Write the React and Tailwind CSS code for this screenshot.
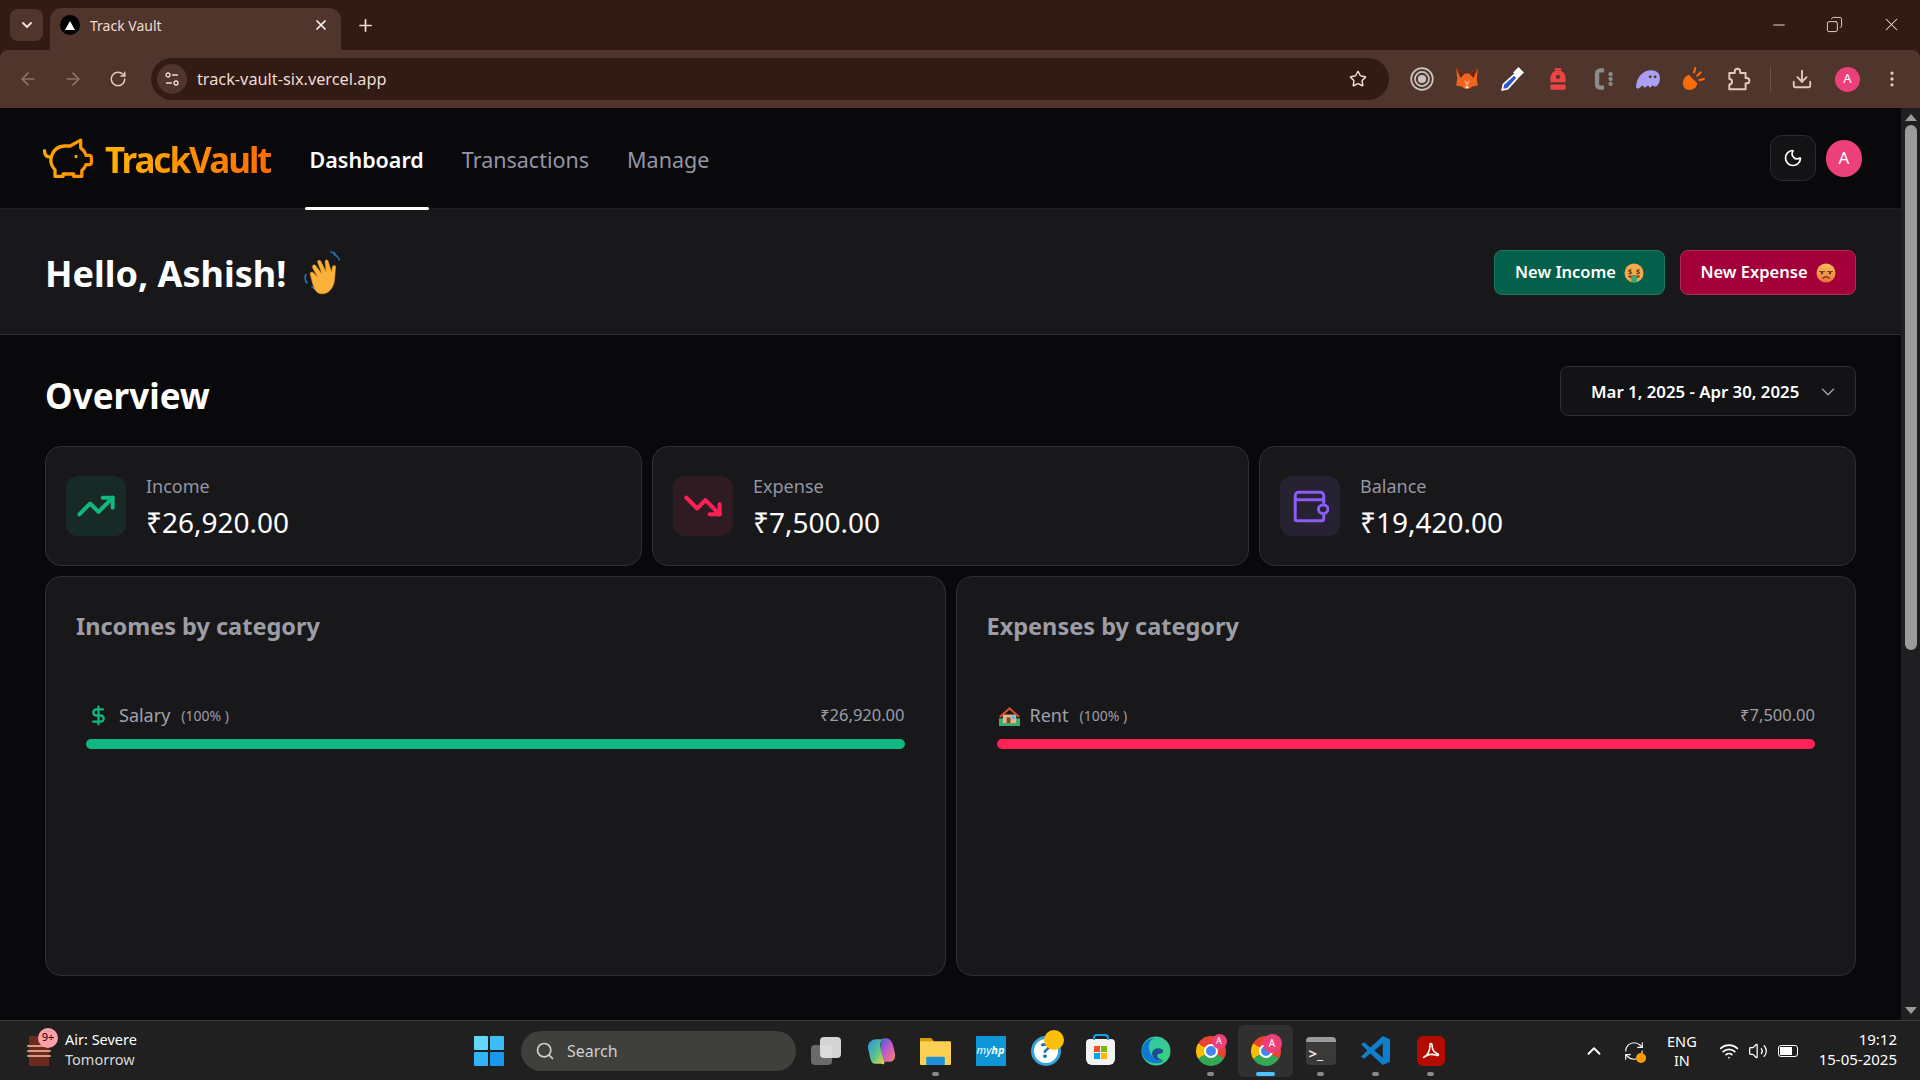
import {
  ArrowLeft, ArrowRight, ChevronDown, ChevronUp, Copy, Download, DollarSign, EllipsisVertical, Minus, Moon, Plus,
  RefreshCw, RotateCw, Search, Star, TrendingDown, TrendingUp, Volume2, Wifi, X,
} from 'lucide-react'

const extIcons = [
  <svg key="a" viewBox="0 0 24 24" className="h-[26px] w-[26px]" fill="none" stroke="#c9c3bf" strokeWidth="1.6"><circle cx="12" cy="12" r="10" /><circle cx="12" cy="12" r="6.5" /><circle cx="12" cy="12" r="3" fill="#c9c3bf" /></svg>,
  <svg key="b" viewBox="0 0 24 24" className="h-[26px] w-[26px]"><path d="M2 2l8 5h4l8-5-1 10 1 6-5 1-3 2h-4l-3-2-5-1 1-6z" fill="#f0641e" /><path d="M2 2l8 5-4 4zM22 2l-8 5 4 4z" fill="#6b2a10" /><path d="M9 13l3 6 3-6-3 2z" fill="#f9a27a" /><path d="M10 19h4l-2 2z" fill="#fff" /></svg>,
  <svg key="c" viewBox="0 0 24 24" className="h-[26px] w-[26px]"><path d="M14 8l3 3-9 10-5 1 1-5z" fill="#2f55c9" stroke="#fff" strokeWidth="1.6" /><path d="M13 6l5-5 5 5-5 5z" fill="#fff" /></svg>,
  <svg key="d" viewBox="0 0 24 24" className="h-[26px] w-[26px]"><path d="M5 11a7 7 0 0 1 14 0v4H5z" fill="#ef4444" /><rect x="5" y="17" width="14" height="5" rx="1" fill="#ef4444" /><path d="M9 2h6v2H9z" fill="#ef4444" /><circle cx="12" cy="10" r="2" fill="#4f352c" /></svg>,
  <svg key="e" viewBox="0 0 24 24" className="h-[26px] w-[26px]"><path d="M13 4H9.500a3 3 0 0 0-3 3v10a3 3 0 0 0 3 3H13" fill="none" stroke="#8a8d8c" strokeWidth="4" /><g fill="#8a8d8c"><circle cx="19" cy="7.500" r="2" /><circle cx="19" cy="12" r="2" /><circle cx="19" cy="16.500" r="2" /></g></svg>,
  <svg key="f" viewBox="0 0 24 24" className="h-[26px] w-[26px]"><path d="M1 20c0-9 6-16 14-16 5 0 8 3 8 7 0 6-3 8-5 8l-2-1-2 2-2-2-3 2-2-2-4 3z" fill="#ab9ff2" /><circle cx="14" cy="10" r="1.300" fill="#4f352c" /><circle cx="18.500" cy="10" r="1.300" fill="#4f352c" /></svg>,
  <svg key="g" viewBox="0 0 24 24" className="h-[26px] w-[26px]"><path d="M8 8l8 8a7 7 0 0 1-12 4C1 16 3 10 8 8z" fill="#f96b08" /><path d="M13 6l1-4M16 9l3-3M18 13l4-1" stroke="#f96b08" strokeWidth="2" strokeLinecap="round" /></svg>,
  <svg key="h" viewBox="0 0 24 24" className="h-[26px] w-[26px]" fill="none" stroke="#e6c9bc" strokeWidth="1.800" strokeLinejoin="round"><path d="M4 6.500h5V5a2.500 2.500 0 0 1 5 0v1.500h5v4.500h1a2.500 2.500 0 0 1 0 5h-1v5.500H4V17a2.500 2.500 0 0 0 0-5z" /></svg>,
]

function BrowserChrome() {
  return (
    <div className="bg-[#311b14]">
      <div className="flex h-[50px] items-end pl-[10px]">
        <div className="mb-[9px] flex h-[32px] w-[33px] items-center justify-center rounded-lg bg-[#4f352c] text-[#f0dcd3]">
          <ChevronDown size={16} strokeWidth={3} />
        </div>
        <div className="ml-[7px] flex h-[42px] w-[291px] items-center rounded-t-xl bg-[#4f352c] px-[10px] pb-[8px] text-[#f0dcd3]">
          <span className="flex h-[20px] w-[20px] items-center justify-center rounded-full bg-black">
            <span className="h-0 w-0 border-x-[5px] border-b-[9px] border-x-transparent border-b-white" />
          </span>
          <span className="ml-[10px] text-[14px]">Track Vault</span>
          <X size={16} strokeWidth={2.5} className="ml-auto mr-[2px] text-white" />
        </div>
        <Plus size={19} strokeWidth={2.2} className="mb-[15px] ml-[15px] text-[#f0dcd3]" />
        <div className="mb-[15px] ml-auto flex items-center gap-[38px] pr-[18px] text-[#f0dcd3]">
          <Minus size={18} strokeWidth={1.3} />
          <Copy size={17} strokeWidth={1.3} className="-scale-x-100" />
          <X size={21} strokeWidth={1.2} />
        </div>
      </div>
      <div className="flex h-[58px] items-center rounded-t-lg bg-[#4f352c] pl-[18px] pr-[18px] text-[#e6c9bc]">
        <ArrowLeft size={20} className="text-[#8f7268]" />
        <ArrowRight size={20} className="ml-[25px] text-[#8f7268]" />
        <RotateCw size={18} className="ml-[26px]" />
        <div className="ml-[24px] flex h-[42px] w-[1239px] items-center rounded-full bg-[#311b14] pl-[6px] pr-[22px]">
          <span className="flex h-[30px] w-[30px] items-center justify-center rounded-full bg-[#4f352c] text-[#f0dcd3]">
            <svg viewBox="0 0 16 16" className="h-[16px] w-[16px]" fill="none" stroke="currentColor" strokeWidth="1.300"><circle cx="4" cy="4" r="2" /><path d="M8 4h6M2 12h6" /><circle cx="12" cy="12" r="2" /></svg>
          </span>
          <span className="ml-[10px] text-[16.300px] text-[#f0dcd3]">track-vault-six.vercel.app</span>
          <Star size={18} className="ml-auto text-[#f0dcd3]" />
        </div>
        <div className="ml-[20px] flex w-[362px] items-center justify-between">
          {extIcons}
          <span className="h-[26px] w-px bg-[#6b5046]" />
        </div>
        <Download size={22} className="ml-[20px]" />
        <span className="ml-[22px] flex h-[25px] w-[25px] items-center justify-center rounded-full bg-[#ec407a] text-[13px] text-white">A</span>
        <EllipsisVertical size={20} className="ml-[22px]" />
      </div>
    </div>
  )
}

function Logo() {
  return (
    <svg viewBox="0 0 24 24" className="mt-[4px] h-[56px] w-[56px]" fill="none" strokeWidth="1.400" strokeLinecap="round" strokeLinejoin="round">
      <defs>
        <linearGradient id="pig" x1="0" x2="1" y1="0" y2="0">
          <stop offset="0" stopColor="#ffa800" />
          <stop offset="1" stopColor="#ff8f00" />
        </linearGradient>
      </defs>
      <path stroke="url(#pig)" d="M15 10.500v.01M17 3.500v3.300a6 6 0 0 1 2.300 3.200h1.300a1 1 0 0 1 1 1v2a1 1 0 0 1-1 1h-1.300a6 6 0 0 1-1.800 2.500v2.500h-3.500v-1h-4.500v1H6v-2.800A6 6 0 0 1 10 6h2.500zM1.500 8c0 1.700 1 2.700 2.600 2.700" />
    </svg>
  )
}

function Hand() {
  return (
    <svg viewBox="0 0 40 44" className="h-[46px] w-[42px]">
      <path d="M4 22c-2 3-1 7 1 9M9 34c2 2 4 3 6 4M30 3c3 1 5 3 6 6M27 1c2 0 4 1 5 2" fill="none" stroke="#1f77c0" strokeWidth="1.500" />
      <path d="M8 23c-1-2 1-4 3-2l4 4-5-9c-1-2 2-4 3-2l6 8-4-11c-1-2 2-3 3-1l5 10-1-10c0-2 3-2 3 0l3 10 1-5c1-2 4-1 3 1l-1 12c-1 7-5 13-12 13-6 0-8-5-11-18z" fill="#fbb13c" stroke="#f59e0b" strokeWidth="0.500" />
    </svg>
  )
}

function MoneyFace() {
  return (
    <svg viewBox="0 0 20 20" className="h-[20px] w-[20px]">
      <circle cx="10" cy="10" r="9.500" fill="#f5a94a" />
      <text x="6" y="10.500" fontSize="7" fontWeight="700" textAnchor="middle" fill="#5a3a12">$</text>
      <text x="14" y="10.500" fontSize="7" fontWeight="700" textAnchor="middle" fill="#5a3a12">$</text>
      <path d="M4 12.500h12c0 1.500-1.500 2.500-2.500 2.500H6.500C5.500 15 4 14 4 12.500z" fill="#8a3a2a" />
      <rect x="7" y="13" width="6" height="6" rx="1" fill="#3aa76d" />
    </svg>
  )
}

function TiredFace() {
  return (
    <svg viewBox="0 0 20 20" className="h-[20px] w-[20px]">
      <defs>
        <linearGradient id="tired" x1="0" x2="0" y1="0" y2="1">
          <stop offset="0" stopColor="#f8c25a" />
          <stop offset="1" stopColor="#f0703a" />
        </linearGradient>
      </defs>
      <circle cx="10" cy="10" r="9.500" fill="url(#tired)" />
      <path d="M3.500 8.500h5M11.500 8.500h5" stroke="#7a4b12" strokeWidth="1.200" strokeLinecap="round" />
      <circle cx="6" cy="10" r="1.200" fill="#5a3412" />
      <circle cx="14" cy="10" r="1.200" fill="#5a3412" />
      <path d="M7 15c1.500-1.500 4.500-1.500 6 0" fill="none" stroke="#5a3412" strokeWidth="1.200" strokeLinecap="round" />
    </svg>
  )
}

function House() {
  return (
    <svg viewBox="0 0 22 22" className="h-[21px] w-[21px]">
      <rect x="0" y="14" width="22" height="8" fill="#3fae6a" />
      <path d="M4 10h14v9H4z" fill="#e8b48a" />
      <path d="M0 12L11 2l11 10-2 1-9-8-9 8z" fill="#d9532c" />
      <rect x="8" y="13" width="4" height="6" fill="#7a4a2a" />
      <circle cx="15" cy="13" r="2" fill="#5db9e8" />
    </svg>
  )
}

function WalletIcon() {
  return (
    <svg viewBox="0 0 36 36" className="h-[38px] w-[38px]" fill="none" stroke="#8b5cf6" strokeWidth="2.800" strokeLinecap="round" strokeLinejoin="round">
      <path d="M31 14V8a3 3 0 0 0-3-3H7a3 3 0 0 0-3 3v22a2 2 0 0 0 2 2h23a2 2 0 0 0 2-2v-5" />
      <path d="M4 10a2 2 0 0 0 2 2h25v3" />
      <rect x="26" y="17" width="9" height="8" rx="4" />
    </svg>
  )
}

const stats = [
  { label: 'Income', value: '₹26,920.00', box: 'bg-[#172a26]', icon: <TrendingUp size={40} strokeWidth={2.4} className="text-[#10b981]" /> },
  { label: 'Expense', value: '₹7,500.00', box: 'bg-[#2f1c23]', icon: <TrendingDown size={40} strokeWidth={2.4} className="text-[#ff2056]" /> },
  { label: 'Balance', value: '₹19,420.00', box: 'bg-[#272232]', icon: <WalletIcon /> },
]

function StatCard({ item }) {
  return (
    <div className="flex h-[120px] flex-1 items-center gap-[20px] rounded-2xl border border-[#303034] bg-[#18181b] px-[20px]">
      <div className={`flex h-[60px] w-[60px] items-center justify-center rounded-xl ${item.box}`}>{item.icon}</div>
      <div className="pt-[2px]">
        <p className="text-[18px] leading-[24px] text-[#9495a3]">{item.label}</p>
        <p className="mt-[5px] text-[28px] leading-[38px] text-white">{item.value}</p>
      </div>
    </div>
  )
}

function CategoryCard({ title, icon, name, amount, bar }) {
  return (
    <div className="h-[400px] flex-1 rounded-2xl border border-[#303034] bg-[#18181b] px-[30px] pt-[31px]">
      <h3 className="text-[23.500px] font-bold leading-[36px] text-[#9d9da6]">{title}</h3>
      <div className="mt-[58px] px-[10px]">
        <div className="flex items-center">
          <span className="flex w-[25px] justify-center">{icon}</span>
          <span className="ml-[8px] text-[18px] text-[#a1a1aa]">{name}</span>
          <span className="ml-[11px] text-[14px] text-[#9d9da6]">(100% )</span>
          <span className="ml-auto text-[16.500px] text-[#9d9da6]">{amount}</span>
        </div>
        <div className={`mt-[10px] h-[10px] rounded-full ${bar}`} />
      </div>
    </div>
  )
}

function Dashboard() {
  return (
    <div className="min-w-0 flex-1 bg-[#09090b]">
      <header className="flex h-[101px] items-center border-b border-[#1f1f22] pl-[41px] pr-[39px]">
        <Logo />
        <span className="ml-[8px] bg-gradient-to-r from-[#ffb300] to-[#ff6a00] bg-clip-text pt-[5px] text-[35px] font-bold tracking-[-2px] text-transparent">TrackVault</span>
        <nav className="ml-[39px] flex h-full items-stretch gap-[38px] pt-[3px] text-[21.500px] leading-[30px]">
          <a className="relative flex items-center font-semibold text-white">
            Dashboard
            <span className="absolute -bottom-[2px] -inset-x-[5px] h-[3px] rounded-sm bg-white" />
          </a>
          <a className="flex items-center text-[#9495a3]">Transactions</a>
          <a className="flex items-center text-[#9495a3]">Manage</a>
        </nav>
        <div className="ml-auto flex items-center gap-[10px]">
          <button className="flex h-[46px] w-[46px] items-center justify-center rounded-xl border border-[#2c2c30] bg-[#131316] text-white">
            <Moon size={20} />
          </button>
          <span className="flex h-[37px] w-[36px] items-center justify-center rounded-full bg-[#ec407a] text-[17px] text-white">A</span>
        </div>
      </header>

      <section className="flex h-[126px] items-center justify-between border-b border-[#303034] bg-[#18181b] px-[45px]">
        <div className="flex items-center gap-[16px] pt-[5px]">
          <h1 className="text-[36px] font-bold text-white">Hello, Ashish!</h1>
          <Hand />
        </div>
        <div className="mt-[1px] flex gap-[15px]">
          <button className="flex h-[45px] w-[171px] items-center justify-center gap-[8px] rounded-lg border border-[#1b7a5f] bg-[#04604a] pt-[1px] text-[16.500px] font-semibold text-white">
            New Income <MoneyFace />
          </button>
          <button className="flex h-[45px] w-[176px] items-center justify-center gap-[8px] rounded-lg border border-[#b52b57] bg-[#a3003a] pt-[1px] text-[16.500px] font-semibold text-white">
            New Expense <TiredFace />
          </button>
        </div>
      </section>

      <section className="px-[45px] pt-[31px]">
        <div className="flex items-start justify-between">
          <h2 className="text-[35px] font-bold leading-[60px] text-white">Overview</h2>
          <button className="flex h-[50px] w-[296px] items-center gap-[18px] rounded-lg border border-[#303034] bg-[#131316] pl-[30px] pt-[1px] text-[16.800px] font-semibold text-white">
            Mar 1, 2025 - Apr 30, 2025
            <ChevronDown size={22} strokeWidth={1.5} className="text-[#a1a1aa]" />
          </button>
        </div>
        <div className="mt-[20px] flex gap-[10px]">
          {stats.map((s) => <StatCard key={s.label} item={s} />)}
        </div>
        <div className="mt-[10px] flex gap-[10px]">
          <CategoryCard title="Incomes by category" name="Salary" amount="₹26,920.00" bar="bg-[#10b981]" icon={<DollarSign size={21} strokeWidth={2.6} className="text-[#10b981]" />} />
          <CategoryCard title="Expenses by category" name="Rent" amount="₹7,500.00" bar="bg-[#ff2056]" icon={<House />} />
        </div>
      </section>
    </div>
  )
}

function Scrollbar() {
  return (
    <div className="flex w-[19px] flex-col items-center bg-[#1f1f21] py-[6px]">
      <span className="h-0 w-0 border-x-[6px] border-b-[7px] border-x-transparent border-b-[#9b9b9b]" />
      <span className="mt-[4px] h-[525px] w-[12px] rounded-full bg-[#9b9b9b]" />
      <span className="mt-auto h-0 w-0 border-x-[6px] border-t-[7px] border-x-transparent border-t-[#9b9b9b]" />
    </div>
  )
}

function ChromeGlyph({ badge }) {
  return (
    <span className="relative block h-[30px] w-[30px]">
      <span className="block h-[30px] w-[30px] rounded-full bg-[conic-gradient(#ea4335_0_120deg,#34a853_120deg_240deg,#fbbc04_240deg_300deg,#ea4335_300deg_360deg)]" />
      <span className="absolute left-[8px] top-[8px] h-[14px] w-[14px] rounded-full border-2 border-white bg-[#4285f4]" />
      <span className={`absolute -right-[1px] -top-[2px] flex items-center justify-center rounded-full bg-[#ec407a] text-white ${badge}`}>A</span>
    </span>
  )
}

const dock = [
  { key: 'tasks', icon: <span className="relative block h-[28px] w-[30px]"><span className="absolute bottom-0 left-0 h-[20px] w-[21px] rounded-sm bg-[#6a6a6a]" /><span className="absolute right-0 top-0 h-[21px] w-[21px] rounded-sm bg-[#e8e8e8] opacity-90" /></span> },
  {
    key: 'copilot',
    icon: (
      <svg viewBox="0 0 28 28" className="h-[30px] w-[30px]">
        <defs>
          <linearGradient id="copA" x1="0" y1="0" x2="1" y2="1"><stop offset="0" stopColor="#2f8fe8" /><stop offset=".55" stopColor="#58c48a" /><stop offset="1" stopColor="#f6d43c" /></linearGradient>
          <linearGradient id="copB" x1="0" y1="0" x2="1" y2="1"><stop offset="0" stopColor="#3a5fe0" /><stop offset=".5" stopColor="#c85ac8" /><stop offset="1" stopColor="#f5885a" /></linearGradient>
        </defs>
        <path d="M16 2h3c3 0 5 3 6 6l2 8c1 4-1 8-5 8h-5l-3-10c-1-4 0-9 2-12z" fill="url(#copB)" />
        <path d="M9 3h7c-3 2-3 6-2 10l3 11c1 2-1 3-3 2H9c-3 0-4-2-5-5L2 12C1 7 5 3 9 3z" fill="url(#copA)" />
      </svg>
    ),
  },
  { key: 'files', icon: <svg viewBox="0 0 30 30" className="h-[31px] w-[31px]"><path d="M0 3h11l3 4H0z" fill="#d99b06" /><rect x="0" y="6" width="30" height="23" rx="1" fill="#fcd053" /><rect x="6" y="21" width="18" height="8" rx="1" fill="#1c8fd8" /></svg>, dot: true },
  { key: 'hp', icon: <span className="flex h-[30px] w-[30px] items-center justify-center bg-[#0f96d6] text-[11px] italic text-white">my<span className="font-bold">hp</span></span> },
  { key: 'help', icon: <span className="relative flex h-[30px] w-[30px] items-center justify-center rounded-full border-[3px] border-[#35a4dd] bg-white text-[21px] font-bold leading-none text-[#17719f]">?<span className="absolute -right-[6px] -top-[9px] h-[20px] w-[20px] rounded-full bg-[#fdbf08]" /></span> },
  { key: 'store', icon: <span className="relative mt-[3px] flex h-[26px] w-[29px] items-center justify-center rounded-b-md rounded-t-sm bg-[#f3f3f3]"><span className="absolute -top-[5px] h-[6px] w-[16px] rounded-t-sm border-x-2 border-t-2 border-[#19a0e0]" /><span className="grid grid-cols-2 gap-px"><span className="h-[6px] w-[6px] bg-[#f25022]" /><span className="h-[6px] w-[6px] bg-[#7fba00]" /><span className="h-[6px] w-[6px] bg-[#00a4ef]" /><span className="h-[6px] w-[6px] bg-[#ffb900]" /></span></span> },
  { key: 'edge', icon: <svg viewBox="0 0 30 30" className="h-[30px] w-[30px]"><defs><linearGradient id="edge" x1="0" y1="0" x2="1" y2="1"><stop offset="0" stopColor="#31c5b6" /><stop offset="1" stopColor="#3bd16f" /></linearGradient></defs><circle cx="15" cy="15" r="14.500" fill="url(#edge)" /><path d="M1 15C1 7 8 2 14 2c-5 2-7 6-6 11 1 7 8 13 15 12-7 5-22 2-22-10z" fill="#0f78d4" /><path d="M11 17c1-5 7-6 11-3 1 3-3 4-5 4-2 2 0 5 5 6-5 2-11-2-11-7z" fill="#1d4f91" /></svg> },
  { key: 'chrome1', icon: <ChromeGlyph badge="h-[15px] w-[15px] text-[9px]" />, dot: true },
  { key: 'chrome2', icon: <ChromeGlyph badge="h-[19px] w-[19px] text-[10px]" />, active: true },
  { key: 'term', icon: <span className="flex h-[28px] w-[30px] flex-col overflow-hidden rounded-sm bg-[#3a3a3a]"><span className="h-[5px] bg-[#9b9b9b]" /><span className="flex flex-1 items-center pl-[3px] text-[15px] font-bold leading-none text-[#e8e8e8]">&gt;_</span></span>, dot: true },
  { key: 'vscode', icon: <svg viewBox="0 0 30 30" className="h-[31px] w-[31px]"><path d="M22 1l7 3v22l-7 3L10 18l-6 5-3-2 6-6-6-6 3-2 6 5z" fill="#0f7fcc" /><path d="M22 8l-8 7 8 7z" fill="#202020" /></svg>, dot: true },
  { key: 'pdf', icon: <span className="flex h-[30px] w-[28px] items-center justify-center rounded-md bg-[#b30b00]"><svg viewBox="0 0 20 20" className="h-[20px] w-[20px]" fill="none" stroke="#fff" strokeWidth="1.600"><path d="M3 16c4-2 6-7 6-12 0-2 2-2 2 0 0 5 3 8 6 9 1 1 0 2-2 1-4-1-7-1-10 1-2 1-3 2-2 1z" /></svg></span>, dot: true },
]

function Taskbar() {
  return (
    <div className="flex h-[60px] items-center border-t border-[#3a3a3a] bg-[#202020] text-white">
      <div className="flex w-[474px] items-center pl-[29px]">
        <span className="relative flex h-[30px] w-[20px] flex-col items-center justify-center gap-[3px] bg-[#6b2a1c]">
          <span className="h-[2px] w-[24px] rounded bg-[#d99a85]" />
          <span className="h-[2px] w-[24px] rounded bg-[#d99a85]" />
          <span className="h-[2px] w-[24px] rounded bg-[#d99a85]" />
          <span className="absolute -right-[9px] -top-[8px] flex h-[20px] w-[20px] items-center justify-center rounded-full bg-[#ff9fa8] text-[11px] text-black">9+</span>
        </span>
        <div className="-mt-[3px] ml-[16px] text-[14.500px] leading-[20px]">
          <p>Air: Severe</p>
          <p className="text-[#d8d8d8]">Tomorrow</p>
        </div>
      </div>
      <div className="flex h-[30px] w-[30px] flex-wrap content-between justify-between">
        <span className="h-[14px] w-[14px] rounded-[1px] bg-[#64d6fa]" />
        <span className="h-[14px] w-[14px] rounded-[1px] bg-[#3cbdf6]" />
        <span className="h-[14px] w-[14px] rounded-[1px] bg-[#32b4f5]" />
        <span className="h-[14px] w-[14px] rounded-[1px] bg-[#1a98ef]" />
      </div>
      <div className="ml-[17px] flex h-[40px] w-[275px] items-center rounded-full bg-[#3f3f3b] pl-[14px] text-[#cfcfcf]">
        <Search size={20} />
        <span className="ml-[12px] text-[16px]">Search</span>
      </div>
      <div className="ml-[2px] flex">
        {dock.map((d) => (
          <div key={d.key} className={`relative flex h-[52px] w-[55px] items-center justify-center rounded-md ${d.active ? 'bg-[#303030]' : ''}`}>
            {d.icon}
            {d.dot && <span className="absolute bottom-[1px] h-[4px] w-[7px] rounded-full bg-[#8a8a8a]" />}
            {d.active && <span className="absolute bottom-[1px] h-[4px] w-[19px] rounded-full bg-[#4cc2ff]" />}
          </div>
        ))}
      </div>
      <div className="ml-auto flex items-center pr-[23px]">
        <ChevronUp size={22} />
        <span className="relative ml-[18px] block h-[22px] w-[22px]">
          <RefreshCw size={22} strokeWidth={1.2} />
          <span className="absolute -bottom-[1px] -right-[1px] h-[10px] w-[10px] rounded-full bg-[#ff9d00]" />
        </span>
        <div className="ml-[22px] text-center text-[14.500px] leading-[19px]">
          <p>ENG</p>
          <p>IN</p>
        </div>
        <Wifi size={20} className="ml-[22px]" />
        <Volume2 size={20} strokeWidth={1.5} className="ml-[9px]" />
        <span className="ml-[10px] flex h-[12px] w-[20px] items-center rounded-[3px] border border-white p-[1px]"><span className="h-full w-[12px] bg-white" /></span>
        <div className="-mt-[3px] ml-[21px] text-right text-[15px] leading-[20px]">
          <p>19:12</p>
          <p>15-05-2025</p>
        </div>
      </div>
    </div>
  )
}

export default function App() {
  return (
    <div className="flex h-screen flex-col overflow-hidden bg-[#09090b] font-['Noto_Sans',sans-serif]">
      <BrowserChrome />
      <div className="flex min-h-0 flex-1">
        <Dashboard />
        <Scrollbar />
      </div>
      <Taskbar />
    </div>
  )
}
